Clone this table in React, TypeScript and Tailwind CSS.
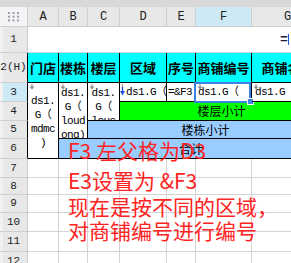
import React from "react";

const MONO = "font-['Liberation_Mono','Noto_Sans_CJK_SC',monospace] tracking-[-0.6px]";
const CJK = "font-['Noto_Sans_CJK_SC',sans-serif]";

// little gray "linked cell" arrow shown at the top-left of template cells
const Tick: React.FC = () => (
  <svg className="absolute left-[1px] top-[1px]" width="6" height="6" viewBox="0 0 6 6">
    <path d="M3 0v3" stroke="#8c8c8c" strokeWidth="1" />
    <path d="M0.5 2.5h5L3 5.5z" fill="#8c8c8c" />
  </svg>
);

const BlueArrow: React.FC = () => (
  <svg className="absolute left-0 top-[1px]" width="6" height="12" viewBox="0 0 6 12">
    <path d="M2.5 0v3" stroke="#8c8c8c" strokeWidth="1" />
    <path d="M2.5 3v5" stroke="#1f4fe6" strokeWidth="1.4" />
    <path d="M0 7h5l-2.5 4.5z" fill="#1f4fe6" />
  </svg>
);

const RowHead: React.FC<{ label: string; table?: boolean; active?: boolean }> = ({ label, table, active }) => (
  <div
    className={`flex items-center justify-center border-b border-[#cfcfcf] border-r text-[11px] text-[#222] shadow-[inset_3px_0_0_#f1f1f1] font-['Liberation_Mono',monospace] ${
      table ? "border-r-black" : "border-r-[#c8c8c8]"
    } ${active ? "bg-[#cde9f6]" : "bg-[#e8e8e8]"}`}
  >
    {label}
  </div>
);

const Lines: React.FC<{ lines: string[] }> = ({ lines }) => (
  <>
    {lines.map((l, i) => (
      <span key={i} className="block h-[14px] whitespace-nowrap">
        {l}
      </span>
    ))}
  </>
);

const cell = "relative border-r border-b border-black overflow-hidden";
const one = `flex items-center whitespace-nowrap text-[11px] ${MONO}`;
const head = `flex items-center justify-center border-r border-b border-black bg-[#00ffff] overflow-hidden whitespace-nowrap text-[13px] font-bold text-black ${CJK}`;
const plain = "border-r border-b border-[#d4d4d4] bg-white";

export default function App() {
  const letters = ["A", "B", "C", "D", "E", "F", "G"];
  const lower = ["7", "8", "9", "10", "11", "12"];

  return (
    <div className="relative h-[263px] w-[291px] overflow-hidden bg-white">
      <div className="h-[7px] bg-[#d8d8d8]" />

      {/* header row + sheet rows 1-6 */}
      <div className="grid grid-cols-[28px_31px_29px_32px_47px_29px_56px_72px] grid-rows-[20px_26px_30px_19px_19px_18px_20px]">
        <div className="flex items-center justify-center border-r border-b border-[#cfcfcf] bg-[#f4f4f6]">
          <svg width="12" height="10" viewBox="0 0 12 10">
            {[0, 1, 2].map((r) =>
              [0, 1, 2].map((c) => (
                <rect key={`${r}${c}`} x={c * 4.5} y={r * 3.7} width="2" height="2" fill="#9b9da6" />
              ))
            )}
          </svg>
        </div>
        {letters.map((l) => (
          <div
            key={l}
            className={`flex items-center justify-center border-r border-b border-[#cfcfcf] text-[12px] text-[#222] font-['Liberation_Mono',monospace] ${
              l === "F" ? "bg-[#cde9f6]" : "bg-[#e8e8e8]"
            }`}
          >
            {l}
          </div>
        ))}

        {/* row 1 */}
        <RowHead label="1" />
        <div className={`col-span-7 flex items-center border-b border-[#d4d4d4] bg-white pl-[252px] text-[13px] font-bold ${MONO}`}>
          <span className="text-[#1b1b3a]">=</span>
          <span className="ml-[1px] h-[11px] w-[1px] bg-[#2255dd]" />
          <span className="text-[#333]">[</span>
        </div>

        {/* row 2 : titles */}
        <RowHead label="2(H)" table />
        <div className={head}>门店</div>
        <div className={head}>楼栋</div>
        <div className={head}>楼层</div>
        <div className={head}>区域</div>
        <div className={head}>序号</div>
        <div className={head}>商铺编号</div>
        <div className={head}>商铺名称</div>

        {/* row 3 : template cells */}
        <RowHead label="3" table active />
        <div className={`${cell} row-span-4 pt-[11px] text-center text-[11px] leading-[14px] ${MONO}`}>
          <Tick />
          <Lines lines={["ds1.", "G（", "mdmc", ")"]} />
        </div>
        <div className={`${cell} row-span-3 pt-[3px] text-center text-[11px] leading-[14px] ${MONO}`}>
          <Tick />
          <Lines lines={["ds1.", "G（", "loud", "ong)"]} />
        </div>
        <div className={`${cell} row-span-2 pt-[3px] text-center text-[11px] leading-[14px] ${MONO}`}>
          <Tick />
          <Lines lines={["ds1.", "G（", "louc", "eng)"]} />
        </div>
        <div className={`${cell} ${one} pl-[6px]`}>
          <BlueArrow />
          ds1.G（
        </div>
        <div className={`${cell} ${one} pl-[1px]`}>=&amp;F3</div>
        <div className={`relative border-r border-b border-black ${one} pl-[2px]`}>
          <Tick />
          ds1.G（
          <div className="absolute left-[-2px] top-[-1px] h-[21px] w-[57px] border-2 border-[#3d82e0]" />
          <div className="absolute left-[51px] top-[15px] h-[7px] w-[7px] border border-white bg-[#3d82e0]" />
        </div>
        <div className={`${cell} ${one} pl-[3px]`}>
          <Tick />
          ds1.G（
        </div>

        {/* row 4 */}
        <RowHead label="4" table />
        <div className={`col-span-4 flex items-center justify-center border-r border-b border-black bg-[#00ff00] text-[12px] ${CJK}`}>
          楼层小计
        </div>

        {/* row 5 */}
        <RowHead label="5" table />
        <div className={`col-span-5 flex items-center justify-center border-r border-b border-black bg-[#99ccff] text-[12px] ${CJK}`}>
          楼栋小计
        </div>

        {/* row 6 */}
        <RowHead label="6" table />
        <div className={`col-span-6 flex items-center justify-center border-r border-b border-black bg-[#99ccff] text-[12px] ${CJK}`}>
          合计
        </div>
      </div>

      {/* empty rows */}
      <div className="grid grid-cols-[28px_31px_29px_32px_47px_29px_56px_72px] grid-rows-[19px_17px_18px_19px_20px_19px]">
        {lower.map((n) => (
          <React.Fragment key={n}>
            <RowHead label={n} />
            {letters.map((l) => (
              <div key={l} className={plain} />
            ))}
          </React.Fragment>
        ))}
      </div>

      {/* annotation text box */}
      <div className={`pointer-events-none absolute left-[68px] top-[140px] text-[21px] leading-[20px] text-[#ff2424] whitespace-nowrap ${CJK}`}>
        <div>F3 左父格为D3</div>
        <div className="mt-[10px]">E3设置为 &amp;F3</div>
        <div className="mt-[6px]">现在是按不同的区域，</div>
        <div className="mt-[4px]">对商铺编号进行编号</div>
      </div>
    </div>
  );
}
